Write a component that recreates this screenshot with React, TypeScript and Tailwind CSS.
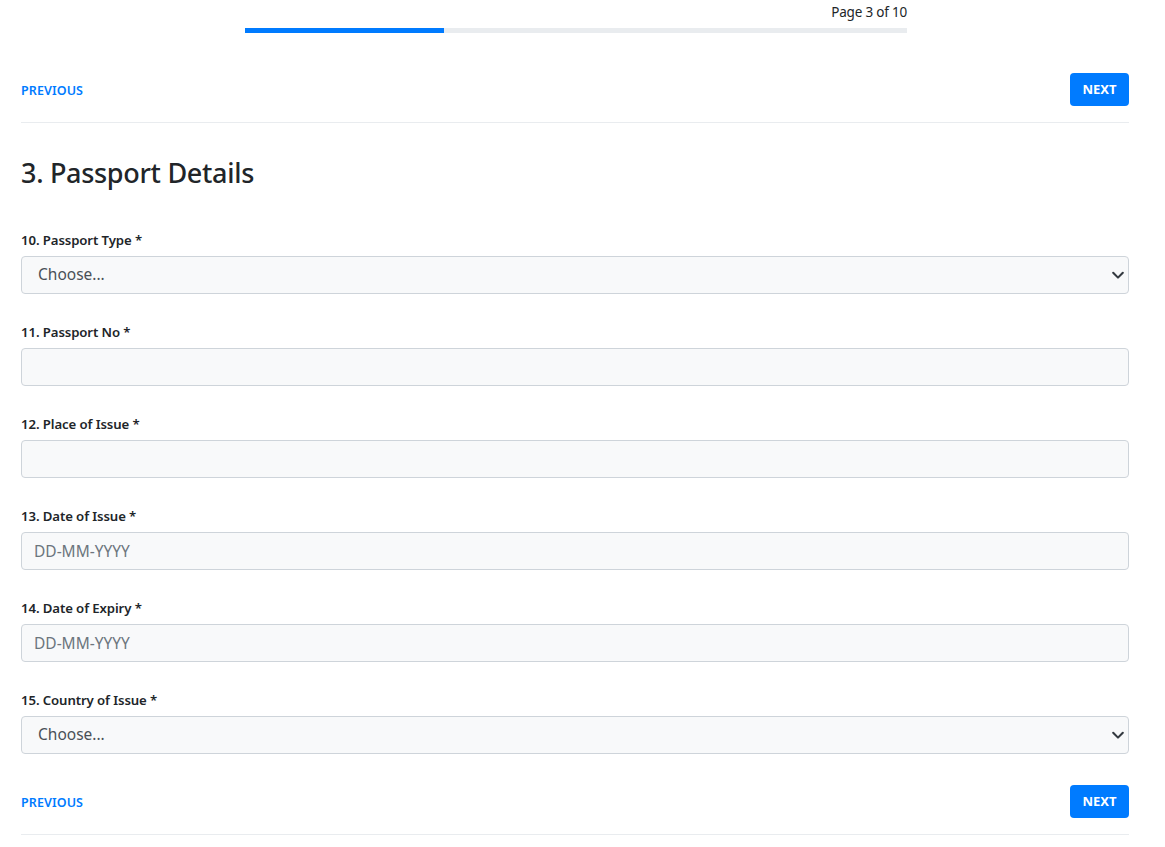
import React from "react";

const font = { fontFamily: '"Noto Sans", "Open Sans", sans-serif' };

function Chevron() {
  return (
    <svg
      className="pointer-events-none absolute right-[4px] top-1/2 -translate-y-1/2 w-[14px] h-[14px]"
      viewBox="0 0 16 16"
      fill="none"
    >
      <path d="m2.5 5.5 5.5 5.5 5.5-5.5" stroke="#343a40" strokeWidth="2.4" strokeLinecap="round" strokeLinejoin="round" />
    </svg>
  );
}

function NavRow() {
  return (
    <div className="flex items-center justify-between h-[33px]">
      <button className="pt-[3px] text-[12.5px] font-semibold text-[#007bff] tracking-[0.1px] uppercase">Previous</button>
      <button className="h-[33px] w-[59px] rounded-[4px] bg-[#007bff] text-white text-[13px] font-bold">NEXT</button>
    </div>
  );
}

function Label({ children }: { children: React.ReactNode }) {
  return (
    <label className="block text-[13.2px] tracking-[-0.1px] leading-[21px] font-semibold text-[#212529] mb-[5px]">
      {children}
    </label>
  );
}

function SelectField({ label }: { label: string }) {
  return (
    <div className="mb-[28px]">
      <Label>{label}</Label>
      <div className="relative">
        <select
          className="appearance-none w-full h-[38px] rounded-[4px] border border-[#ced4da] bg-[#f8f9fa] pl-[16px] pr-8 text-[15.5px] text-[#495057] outline-none"
          style={font}
          defaultValue=""
        >
          <option value="">Choose...</option>
        </select>
        <Chevron />
      </div>
    </div>
  );
}

function InputField({ label, placeholder }: { label: string; placeholder?: string }) {
  return (
    <div className="mb-[28px]">
      <Label>{label}</Label>
      <input
        className="w-full h-[38px] rounded-[4px] border border-[#ced4da] bg-[#f8f9fa] px-[12px] text-[15.5px] text-[#495057] placeholder:text-[#6c757d] outline-none"
        style={font}
        placeholder={placeholder}
      />
    </div>
  );
}

export default function App() {
  return (
    <div className="bg-white min-h-[847px]" style={font}>
      <div className="ml-[21px] w-[1108px]">
        <div className="w-[662px] ml-[224px] pt-[2px]">
          <div className="text-right text-[13.5px] tracking-[-0.2px] leading-[21px] text-[#212529]">Page 3 of 10</div>
          <div className="mt-[5px] h-[5px] bg-[#e9ecef]">
            <div className="h-full bg-[#007bff]" style={{ width: "30%" }} />
          </div>
        </div>
        <div className="mt-[40px]">
          <NavRow />
        </div>
        <div className="mt-[16px] h-px bg-[#e9ecef]" />
        <h3 className="mt-[33px] text-[27px] tracking-[-0.3px] leading-[34px] font-medium text-[#212529]">
          3. Passport Details
        </h3>
        <div className="mt-[40px]">
          <SelectField label="10. Passport Type *" />
          <InputField label="11. Passport No *" />
          <InputField label="12. Place of Issue *" />
          <InputField label="13. Date of Issue *" placeholder="DD-MM-YYYY" />
          <InputField label="14. Date of Expiry *" placeholder="DD-MM-YYYY" />
          <SelectField label="15. Country of Issue *" />
        </div>
        <div className="mt-[31px]">
          <NavRow />
        </div>
        <div className="mt-[16px] h-px bg-[#e9ecef]" />
      </div>
    </div>
  );
}
